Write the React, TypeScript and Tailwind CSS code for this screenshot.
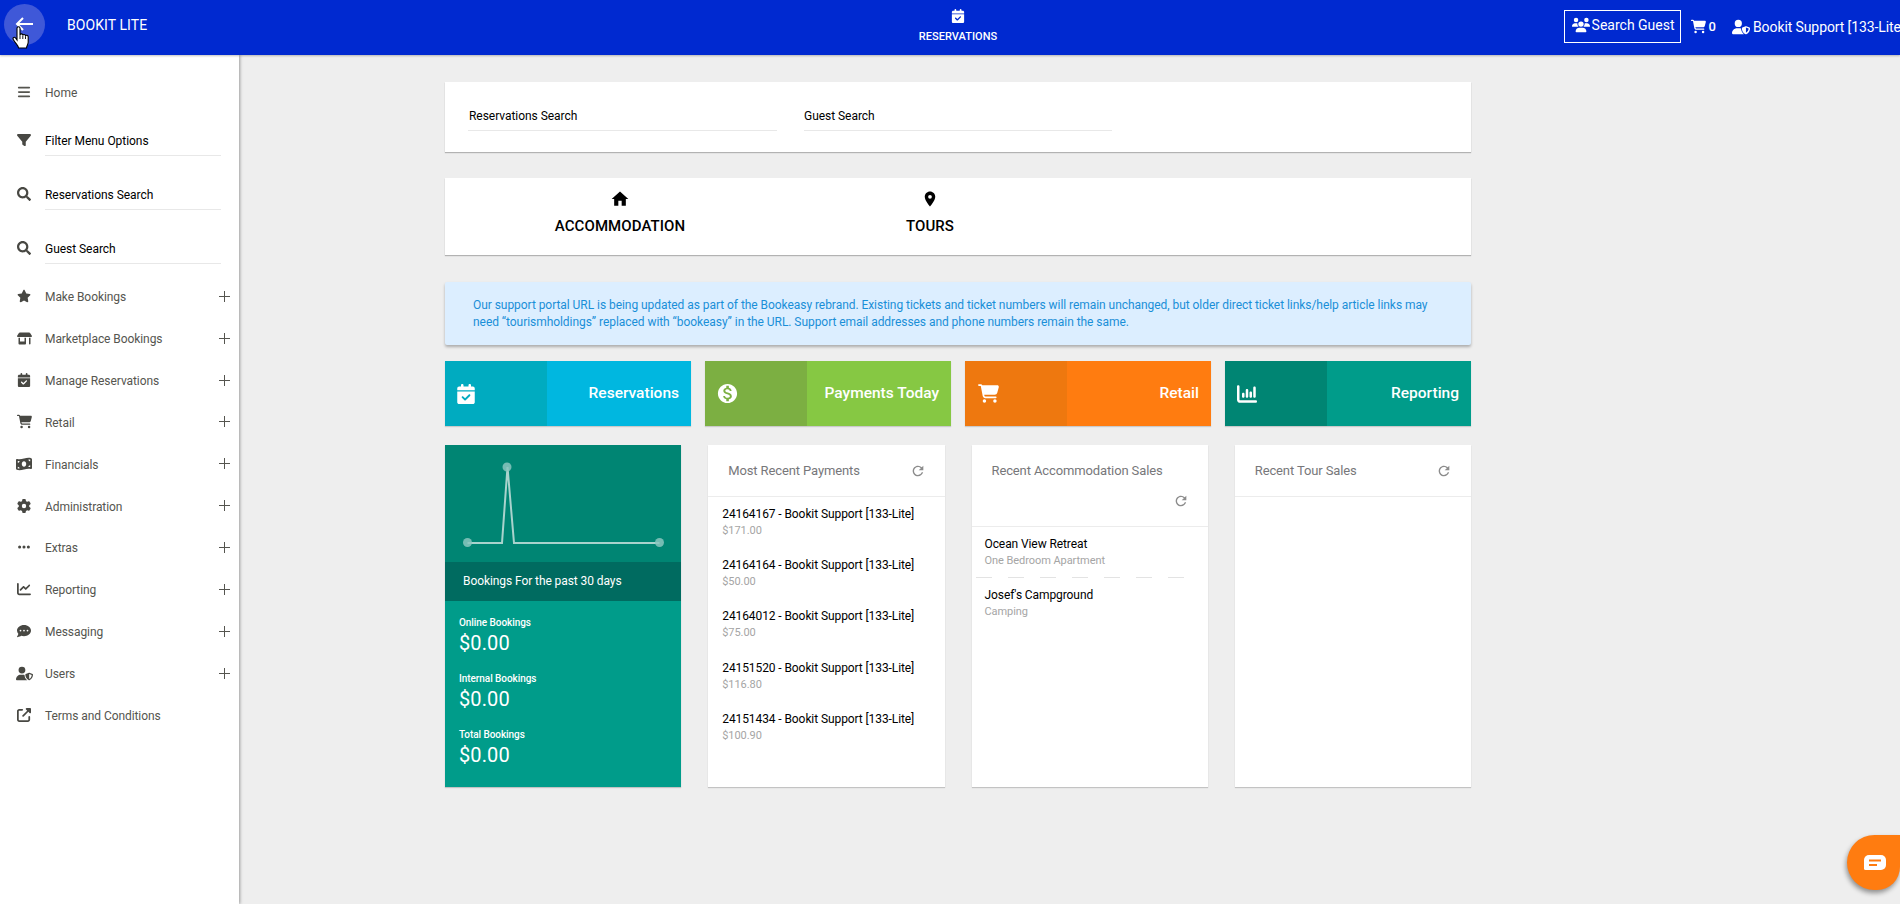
import type { ReactNode } from "react";
import {
  FaBars, FaCalendarCheck, FaCartShopping, FaChartColumn, FaChartLine, FaCommentDots, FaEllipsis, FaFilter, FaGear,
  FaMoneyBillWave, FaShop, FaStar, FaUpRightFromSquare, FaUsers, FaUserShield,
} from "react-icons/fa6";
import { FaSearch } from "react-icons/fa";
import { MdHome, MdLocationOn, MdMonetizationOn, MdRefresh } from "react-icons/md";

const menu: { label: string; icon: ReactNode; leaf?: boolean }[] = [
  { label: "Make Bookings", icon: <FaStar size={14} /> },
  { label: "Marketplace Bookings", icon: <FaShop size={15} /> },
  { label: "Manage Reservations", icon: <FaCalendarCheck size={14} /> },
  { label: "Retail", icon: <FaCartShopping size={15} /> },
  { label: "Financials", icon: <FaMoneyBillWave size={16} /> },
  { label: "Administration", icon: <FaGear size={14} /> },
  { label: "Extras", icon: <FaEllipsis size={14} /> },
  { label: "Reporting", icon: <FaChartLine size={14} /> },
  { label: "Messaging", icon: <FaCommentDots size={14} /> },
  { label: "Users", icon: <FaUserShield size={17} /> },
  { label: "Terms and Conditions", icon: <FaUpRightFromSquare size={14} />, leaf: true },
];

const payments = [
  ["24164167 - Bookit Support [133-Lite]", "$171.00"],
  ["24164164 - Bookit Support [133-Lite]", "$50.00"],
  ["24164012 - Bookit Support [133-Lite]", "$75.00"],
  ["24151520 - Bookit Support [133-Lite]", "$116.80"],
  ["24151434 - Bookit Support [133-Lite]", "$100.90"],
];

const sales = [
  ["Ocean View Retreat", "One Bedroom Apartment"],
  ["Josef's Campground", "Camping"],
];

function Header() {
  return (
    <header className="relative z-20 flex h-[55px] shrink-0 items-start bg-[#0029d0] text-white shadow-[0_1px_2px_rgba(0,0,0,0.25)]">
      <div className="flex w-[860px] items-center pt-1 pl-1">
        <div className="relative flex size-[41px] items-center justify-center rounded-full bg-[#3f58d8] pr-[2px]">
          <svg width="18" height="14" viewBox="0 0 18 14" className="mb-px" fill="none" stroke="white" strokeWidth="2">
            <path d="M18 7H2M8 1L2 7l6 6" />
          </svg>
          <svg width="18" height="24" viewBox="0 0 18 24" className="absolute top-[22px] left-[8px]">
            <path
              d="M5 2.2c0-2 3-2 3 0V9c.3-1.600 2.700-1.400 2.800.3.400-1.300 2.600-1 2.700.6.500-1.100 2.700-.8 2.700 1.100v5.300c0 2-1.500 3.200-1.700 5.700H6.600C6.300 19.500 3 17 1.200 13.200c-.7-1.700 1.300-2.600 2.400-1.200L5 14z"
              fill="white" stroke="black" strokeWidth="1.100"
            />
            <path d="M8 9v4M10.800 9.500V13M13.500 10.200V13" stroke="black" strokeWidth="0.900" />
          </svg>
        </div>
        <span className="ml-[22px] pt-[2px] text-[14px] tracking-[0.07px]">BOOKIT LITE</span>
      </div>
      <div className="flex w-[196px] flex-col items-center pt-[9px]">
        <FaCalendarCheck size={14} />
        <span className="mt-[6px] text-[11px] leading-[15px] font-medium tracking-[0.05px]">RESERVATIONS</span>
      </div>
      <div className="flex flex-1 items-center justify-end overflow-hidden pt-[10px] whitespace-nowrap">
        <div className="flex flex-none items-center">
          <div className="flex h-[33px] w-[117px] items-center border border-white pb-[4px] pl-[7px]">
            <FaUsers size={18} />
            <span className="ml-[2px] pt-[2px] text-[14px]">Search Guest</span>
          </div>
          <FaCartShopping size={15} className="ml-[10px]" />
          <span className="ml-[3px] pt-px text-[13px] font-medium">0</span>
          <FaUserShield size={18} className="ml-[16px]" />
          <span className="ml-[3px] w-[147px] pt-px text-[14px] tracking-[-0.1px]">Bookit Support [133-Lite]</span>
        </div>
      </div>
    </header>
  );
}

function SideField({ label, icon }: { label: string; icon: ReactNode }) {
  return (
    <div className="flex h-[54px] items-start pl-[15px]">
      <div className="flex h-[29px] w-[18px] items-center justify-center text-[#484843]">{icon}</div>
      <div className="ml-[12px] h-[31px] w-[176px] border-b border-[#e8e8e8] pt-px text-[12px] leading-[30px] tracking-[-0.04px] text-black">{label}</div>
    </div>
  );
}

function Sidebar() {
  return (
    <aside className="relative z-10 w-[239px] shrink-0 bg-white pt-[16px] text-[#55554f] shadow-[1px_0_3px_rgba(0,0,0,0.35)]">
      <div className="flex h-[42px] items-center pl-[15px]">
        <span className="flex w-[18px] justify-center"><FaBars size={14} /></span>
        <span className="ml-[12px] pt-[2px] text-[12px]">Home</span>
      </div>
      <div className="pt-[12px]">
        <SideField label="Filter Menu Options" icon={<FaFilter size={14} />} />
        <SideField label="Reservations Search" icon={<FaSearch size={14} />} />
        <SideField label="Guest Search" icon={<FaSearch size={14} />} />
      </div>
      <div className="-mt-[11.500px]">
        {menu.map((m) => (
          <div key={m.label} className="flex h-[41.850px] items-center pl-[15px]">
            <span className="flex w-[18px] justify-center text-[#484843]">{m.icon}</span>
            <span className="ml-[12px] w-[174px] pt-[2px] text-[12px] tracking-[-0.07px] whitespace-nowrap">{m.label}</span>
            {!m.leaf && (
              <svg width="11" height="11" viewBox="0 0 11 11" stroke="#55554f" strokeWidth="1">
                <path d="M5.500 0v11M0 5.500h11" />
              </svg>
            )}
          </div>
        ))}
      </div>
    </aside>
  );
}

function Tile({ label, icon, dark, light }: { label: string; icon: ReactNode; dark: string; light: string }) {
  return (
    <div className={`flex h-[65px] text-white shadow-[0_1px_1px_rgba(0,0,0,0.15)] ${light}`}>
      <div className={`flex w-[102px] items-center pl-[11px] ${dark}`}>{icon}</div>
      <div className="flex flex-1 items-center justify-end pt-px pr-[12px] text-[15.500px] font-medium whitespace-nowrap">{label}</div>
    </div>
  );
}

function Panel({ title, tall, children }: { title: string; tall?: boolean; children?: ReactNode }) {
  return (
    <section className="h-[342px] bg-white shadow-[0_1px_1px_rgba(0,0,0,0.18)]">
      <div className={`flex flex-wrap content-start justify-between border-b border-[#ececec] pt-[11px] pr-[19px] pl-[20px] text-[#77777a] ${tall ? "h-[82px]" : "h-[52px]"}`}>
        <h2 className={`text-[13px] leading-[30px] tracking-[-0.12px] whitespace-nowrap ${tall ? "w-full" : ""}`}>{title}</h2>
        <span className="ml-auto flex h-[29px] items-center text-[#8c8c8c]"><MdRefresh size={16} /></span>
      </div>
      {children}
    </section>
  );
}

function Row({ title, sub, dashed }: { title: string; sub: string; dashed?: boolean }) {
  return (
    <div className={`h-[51.200px] pt-[9px] whitespace-nowrap ${dashed ? "pl-[13px]" : "pl-[14px]"}`}>
      <div className="text-[12px] leading-[17px] tracking-[-0.09px] text-black">{title}</div>
      <div className="text-[11px] leading-[15px] tracking-[-0.06px] text-[#a5a5a5]">{sub}</div>
    </div>
  );
}

function BookingsCard() {
  return (
    <section className="h-[342px] bg-[#009c8a] text-white shadow-[0_1px_1px_rgba(0,0,0,0.18)]">
      <div className="h-[117px] bg-[#008573]">
        <svg width="236" height="117" viewBox="0 0 236 117" fill="none">
          <path d="M22.500 98H57L62.500 22 69 98H214.500" stroke="#a9d3cd" strokeWidth="2" />
          <g fill="#8ac6be" fillOpacity="0.850">
            <circle cx="22.500" cy="97.500" r="4.500" />
            <circle cx="62" cy="22" r="4.500" />
            <circle cx="214.500" cy="97.500" r="4.500" />
          </g>
        </svg>
      </div>
      <div className="h-[39px] bg-[#006b60] pl-[18px] text-[12px] leading-[38px] tracking-[-0.080px]">Bookings For the past 30 days</div>
      <div className="pt-[15px] pl-[14px]">
        {["Online Bookings", "Internal Bookings", "Total Bookings"].map((b) => (
          <div key={b} className="h-[56.200px]">
            <div className="text-[10px] leading-[14px] font-medium tracking-[-0.06px]">{b}</div>
            <div className="text-[20px] leading-[26px] tracking-[0.1px]">$0.00</div>
          </div>
        ))}
      </div>
    </section>
  );
}

export default function App() {
  return (
    <div className="flex h-[904px] w-[1900px] flex-col overflow-hidden bg-[#eeeeee] font-[Roboto,sans-serif]">
      <Header />
      <div className="flex min-h-0 flex-1">
        <Sidebar />
        <main className="ml-[206px] w-[1026px] pt-[27px]">
          <section className="flex h-[70px] gap-[27px] bg-white pt-[18px] pl-[23px] text-[12px] leading-[32px] tracking-[-0.04px] text-black shadow-[0_1px_1px_rgba(0,0,0,0.25)]">
            <div className="h-[31px] w-[309px] border-b border-[#e8e8e8] pl-px">Reservations Search</div>
            <div className="h-[31px] w-[308px] border-b border-[#e8e8e8]">Guest Search</div>
          </section>
          <section className="mt-[26px] flex h-[77px] bg-white pt-[11px] pl-[20px] text-[15px] font-medium tracking-[0.08px] text-black shadow-[0_1px_1px_rgba(0,0,0,0.25)]">
            <div className="flex w-[310px] flex-col items-center">
              <MdHome size={20} />
              <span className="mt-[6px]">ACCOMMODATION</span>
            </div>
            <div className="flex w-[310px] flex-col items-center">
              <MdLocationOn size={18} className="mt-px" />
              <span className="mt-[7px]">TOURS</span>
            </div>
          </section>
          <section className="mt-[27px] h-[63px] rounded-[2px] bg-[#dceeff] pt-[15px] pl-[28px] text-[12px] leading-[17px] tracking-[-0.052px] whitespace-nowrap text-[#1a8fd8] shadow-[0_2px_3px_rgba(0,0,0,0.28)]">
            <p>Our support portal URL is being updated as part of the Bookeasy rebrand. Existing tickets and ticket numbers will remain unchanged, but older direct ticket links/help article links may</p>
            <p>need “tourismholdings” replaced with “bookeasy” in the URL. Support email addresses and phone numbers remain the same.</p>
          </section>
          <div className="mt-[16px] grid grid-cols-4 gap-[14px]">
            <Tile label="Reservations" icon={<FaCalendarCheck size={20} />} dark="bg-[#00abc0]" light="bg-[#00b7e0]" />
            <Tile label="Payments Today" icon={<MdMonetizationOn size={23} />} dark="bg-[#7caf42]" light="bg-[#86c843]" />
            <Tile label="Retail" icon={<FaCartShopping size={21} className="ml-[2px]" />} dark="bg-[#ee780f]" light="bg-[#ff7c10]" />
            <Tile label="Reporting" icon={<FaChartColumn size={20} className="ml-px" />} dark="bg-[#008573]" light="bg-[#009c8a]" />
          </div>
          <div className="mt-[19px] grid grid-cols-4 gap-[27px]">
            <BookingsCard />
            <Panel title="Most Recent Payments">
              {payments.map(([t, s]) => <Row key={t} title={t} sub={s} />)}
            </Panel>
            <Panel title="Recent Accommodation Sales" tall>
              <Row title={sales[0][0]} sub={sales[0][1]} dashed />
              <svg width="210" height="1" className="-mt-px ml-[4px] block">
                <path d="M0 .5h209" stroke="#e3e3e3" strokeDasharray="16 16" />
              </svg>
              <Row title={sales[1][0]} sub={sales[1][1]} dashed />
            </Panel>
            <Panel title="Recent Tour Sales" />
          </div>
        </main>
      </div>
      <button className="absolute top-[835px] left-[1847px] z-30 flex h-[55px] w-[53px] items-center rounded-l-[27.500px] rounded-br-[23px] bg-[#ff7c10] pl-[17px] shadow-[-1px_3px_5px_rgba(0,0,0,0.4)]">
        <svg width="22" height="16" viewBox="0 0 22 16">
          <path d="M5 0h12a5 5 0 0 1 5 5v5a5 5 0 0 1-5 5H1.500A1.500 1.500 0 0 1 0 13.500V5a5 5 0 0 1 5-5z" fill="white" />
          <path d="M5 5.500h12M5 10h8" stroke="#ff7c10" strokeWidth="1.800" />
        </svg>
      </button>
    </div>
  );
}
